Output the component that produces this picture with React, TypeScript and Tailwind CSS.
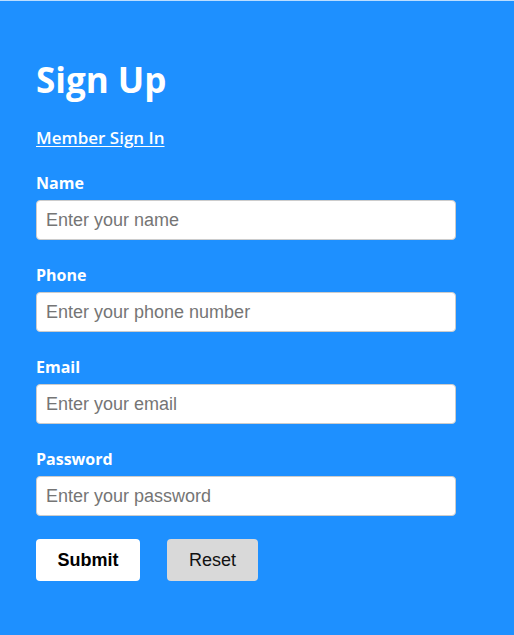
import React from 'react';

const fields = [
  { label: 'Name', type: 'text', placeholder: 'Enter your name' },
  { label: 'Phone', type: 'tel', placeholder: 'Enter your phone number' },
  { label: 'Email', type: 'email', placeholder: 'Enter your email' },
  { label: 'Password', type: 'password', placeholder: 'Enter your password' },
];

const App = () => {
  return (
    <div className="min-h-[635px] w-full bg-[#1e90ff] border-t border-white/70 px-9 pt-[54px] pb-[54px] text-white font-['Open_Sans',sans-serif]">
      <h1 className="text-[35px] font-bold leading-[50px]">Sign Up</h1>
      <a href="#" className="mt-[21px] block text-[17px] font-semibold leading-[24px] underline underline-offset-2">
        Member Sign In
      </a>
      <form className="mt-[21px] flex flex-col gap-[23px]" onSubmit={(e) => e.preventDefault()}>
        {fields.map((f) => (
          <div key={f.label} className="flex flex-col">
            <label className="text-[16px] font-bold leading-[24px] mb-[5px]">{f.label}</label>
            <input
              type={f.type}
              placeholder={f.placeholder}
              className="h-10 w-[420px] rounded border border-[#cccccc] bg-white px-[9px] text-[18px] text-black placeholder:text-[#757575] font-['Liberation_Sans',Arial,sans-serif] outline-none"
            />
          </div>
        ))}
        <div className="flex gap-[27px]">
          <button type="submit" className="h-[42px] w-[104px] rounded bg-white text-[18px] font-bold text-black font-['Liberation_Sans',Arial,sans-serif]">
            Submit
          </button>
          <button type="reset" className="h-[42px] w-[91px] rounded bg-[#d9d9d9] text-[18px] text-[#111] font-['Liberation_Sans',Arial,sans-serif]">
            Reset
          </button>
        </div>
      </form>
    </div>
  );
};

export default App;
